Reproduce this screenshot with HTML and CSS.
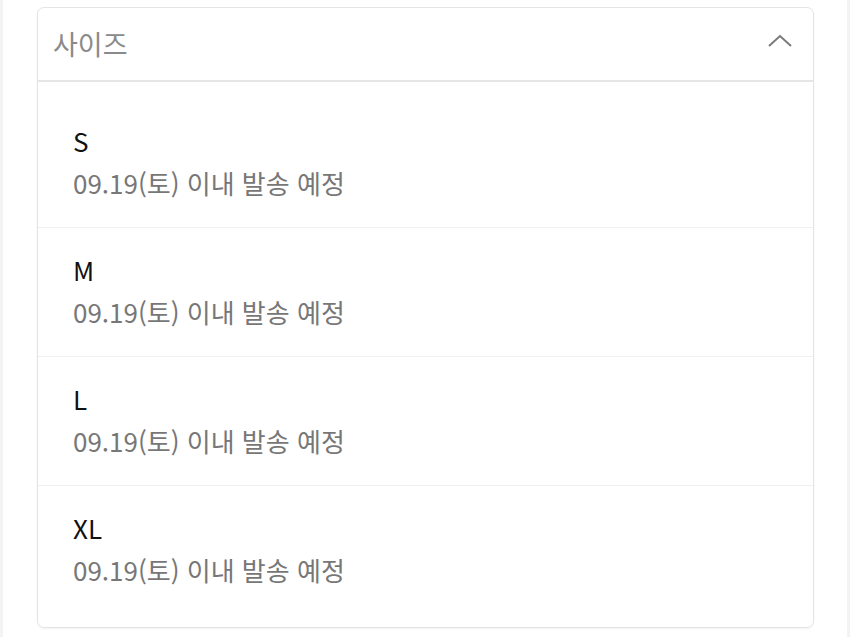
FILE: index.html
```html
<!DOCTYPE html>
<html lang="ko">
<head>
<meta charset="utf-8">
<link rel="stylesheet" href="styles.css">
</head>
<body>
<div class="frame">
  <div class="select">
    <div class="select-head">
      <span class="placeholder">사이즈</span>
      <svg class="chevron" width="26" height="14" viewBox="0 0 26 14"><polyline points="2,12 13,2 24,12" fill="none" stroke="#7a7a7a" stroke-width="2"/></svg>
    </div>
    <ul class="options">
      <li class="option"><div class="size">S</div><div class="ship">09.19(토) 이내 발송 예정</div></li>
      <li class="option"><div class="size">M</div><div class="ship">09.19(토) 이내 발송 예정</div></li>
      <li class="option"><div class="size">L</div><div class="ship">09.19(토) 이내 발송 예정</div></li>
      <li class="option"><div class="size">XL</div><div class="ship">09.19(토) 이내 발송 예정</div></li>
    </ul>
  </div>
</div>
</body>
</html>
```
FILE: styles.css
```css
html, body {
  margin: 0;
  padding: 0;
  background: #fff;
  font-family: "Noto Sans CJK KR", "Noto Sans", sans-serif;
}
.frame {
  box-sizing: border-box;
  width: 850px;
  height: 637px;
  margin: 0;
  padding: 7px 0 0 34px;
  border-left: 3px solid #f3f3f3;
  border-right: 3px solid #f3f3f3;
}
.select {
  box-sizing: border-box;
  width: 777px;
  height: 621px;
  border: 1px solid #e4e4e4;
  border-radius: 7px;
  box-shadow: 0 1px 2px rgba(0,0,0,0.05);
  overflow: hidden;
}
.select-head {
  box-sizing: border-box;
  height: 74px;
  display: flex;
  align-items: center;
  justify-content: space-between;
  padding: 0 20px 0 15px;
  border-bottom: 2px solid #e6e6e6;
}
.placeholder {
  font-size: 27px;
  color: #8a8a8a;
  line-height: 1;
  margin-top: -2px;
}
.chevron {
  display: block;
  margin-top: -6px;
}
.options {
  list-style: none;
  margin: 0;
  padding: 17px 0 12px;
}
.option {
  padding: 21px 35px 23px;
  border-top: 1px solid #f0f0f0;
}
.option:first-child {
  border-top: none;
  padding-top: 21px;
}
.size {
  font-size: 26px;
  line-height: 42px;
  color: #111;
}
.ship {
  font-size: 26px;
  line-height: 42px;
  color: #777;
}
```
